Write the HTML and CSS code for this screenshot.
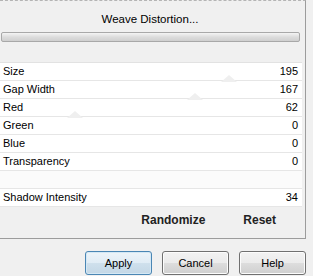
FILE: index.html
```html
<!DOCTYPE html>
<html lang="en">
<head>
  <meta charset="UTF-8">
  <title>Weave Distortion</title>
  <link rel="stylesheet" href="styles.css">
</head>
<body>
<section class="panel">
  <div class="panel__title">Weave Distortion...</div>
  <div class="panel__bar"></div>
  <div class="params">
    <div class="param"><span>Size</span><span>195</span></div>
    <div class="param"><span>Gap Width</span><span>167</span></div>
    <div class="param"><span>Red</span><span>62</span></div>
    <div class="param"><span>Green</span><span>0</span></div>
    <div class="param"><span>Blue</span><span>0</span></div>
    <div class="param"><span>Transparency</span><span>0</span></div>
    <div class="param param--empty"></div>
    <div class="param"><span>Shadow Intensity</span><span>34</span></div>
    <span class="ghost ghost--a"></span>
    <span class="ghost ghost--b"></span>
    <span class="ghost ghost--c"></span>
  </div>
  <div class="actions">
    <button class="link-btn">Randomize</button>
    <button class="link-btn">Reset</button>
  </div>
</section>
<footer class="dialog-buttons">
  <button class="btn btn--default">Apply</button>
  <button class="btn">Cancel</button>
  <button class="btn">Help</button>
</footer>
</body>
</html>
```

FILE: styles.css
```css
body {
  margin: 0;
  width: 313px;
  height: 276px;
  background: #f0f0f0;
  font-family: "Liberation Sans", Arial, sans-serif;
  font-size: 11px;
  color: #000;
  overflow: hidden;
}

.panel {
  width: 305px;
  height: 237px;
  border-top: 1px dashed #b4b4b4;
  border-right: 1px solid #9c9c9c;
  border-bottom: 1px solid #9c9c9c;
  background: #f0f0f0;
}

.panel__title {
  padding-top: 11px;
  height: 14px;
  line-height: 14px;
  text-align: center;
  padding-right: 5px;
  font-size: 11.5px;
}

.panel__bar {
  margin: 6px 5px 0 1px;
  height: 8px;
  border: 1px solid #a8a8a8;
  border-radius: 2px;
  background: linear-gradient(#f4f4f4, #dcdcdc 50%, #cfcfcf);
}

.params {
  position: relative;
  margin-top: 20px;
  margin-right: 3px;
  border-top: 1px solid #e2e2e2;
}

.param {
  display: flex;
  justify-content: space-between;
  height: 17px;
  line-height: 17px;
  padding: 0 4px 0 3px;
  background: #fff;
  border-bottom: 1px solid #e6e6e6;
}

.param--empty {
  background: #fbfbfb;
}

.ghost {
  position: absolute;
  width: 0;
  height: 0;
  border-left: 8px solid transparent;
  border-right: 8px solid transparent;
  border-bottom: 7px solid #efefef;
}

.ghost--a {
  left: 221px;
  top: 12px;
}

.ghost--b {
  left: 187px;
  top: 30px;
}

.ghost--c {
  left: 67px;
  top: 48px;
}

.actions {
  display: flex;
  justify-content: flex-end;
  gap: 38px;
  padding: 6px 29px 0 0;
}

.link-btn {
  font-family: inherit;
  font-size: 12px;
  font-weight: bold;
  background: none;
  border: none;
  padding: 0;
  line-height: 14px;
  color: #222;
}

.dialog-buttons {
  display: flex;
  justify-content: flex-end;
  gap: 10px;
  width: 306px;
  margin-top: 12px;
}

.btn {
  width: 67px;
  height: 24px;
  font-family: inherit;
  font-size: 11px;
  color: #000;
  border: 1px solid #707070;
  border-radius: 3px;
  background: linear-gradient(#f2f2f2, #ebebeb 50%, #dddddd 51%, #cfcfcf);
  box-shadow: inset 0 0 0 1px #fcfcfc;
  padding: 0;
}

.btn--default {
  border-color: #4a86b4;
  background: linear-gradient(#edf4f9, #e0ecf5 50%, #cfe0ec 51%, #c3d7e6);
  box-shadow: inset 0 0 0 1px #d4e8f5;
}
```
